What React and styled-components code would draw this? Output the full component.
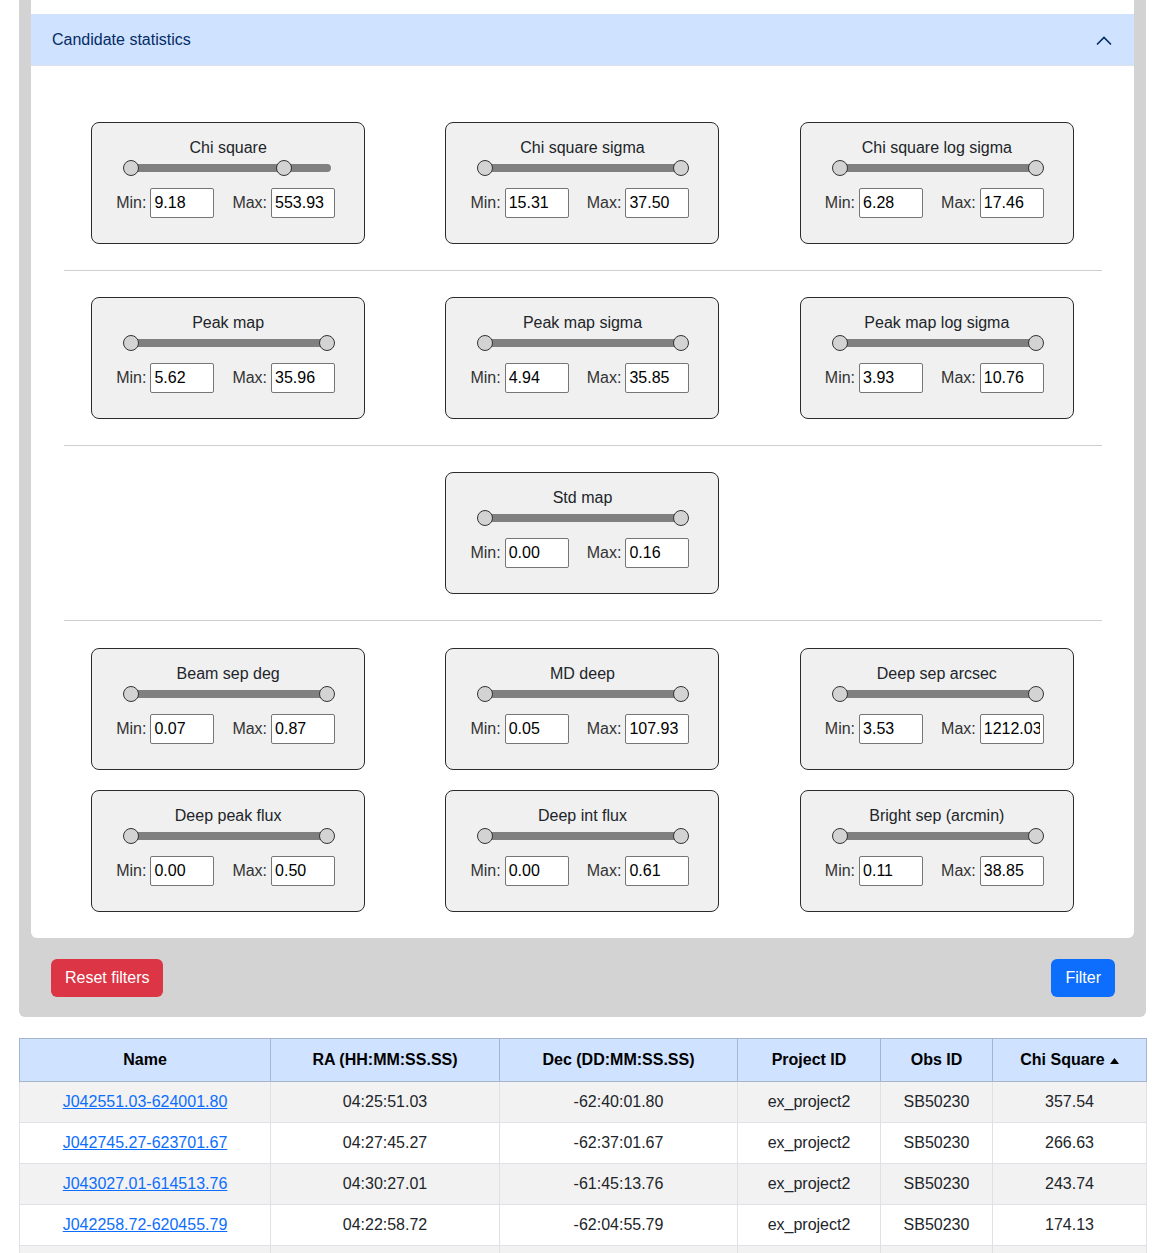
import React from 'react'
import styled, { createGlobalStyle } from 'styled-components'

const filterRows = [
  [
    { title: 'Chi square', min: '9.18', max: '553.93', lo: 0, hi: 0.78 },
    { title: 'Chi square sigma', min: '15.31', max: '37.50', lo: 0, hi: 1 },
    { title: 'Chi square log sigma', min: '6.28', max: '17.46', lo: 0, hi: 1 },
  ],
  [
    { title: 'Peak map', min: '5.62', max: '35.96', lo: 0, hi: 1 },
    { title: 'Peak map sigma', min: '4.94', max: '35.85', lo: 0, hi: 1 },
    { title: 'Peak map log sigma', min: '3.93', max: '10.76', lo: 0, hi: 1 },
  ],
  [null, { title: 'Std map', min: '0.00', max: '0.16', lo: 0, hi: 1 }, null],
]

const lastGroup = [
  { title: 'Beam sep deg', min: '0.07', max: '0.87', lo: 0, hi: 1 },
  { title: 'MD deep', min: '0.05', max: '107.93', lo: 0, hi: 1 },
  { title: 'Deep sep arcsec', min: '3.53', max: '1212.03', lo: 0, hi: 1 },
  { title: 'Deep peak flux', min: '0.00', max: '0.50', lo: 0, hi: 1 },
  { title: 'Deep int flux', min: '0.00', max: '0.61', lo: 0, hi: 1 },
  { title: 'Bright sep (arcmin)', min: '0.11', max: '38.85', lo: 0, hi: 1 },
]

const candidates = [
  ['J042551.03-624001.80', '04:25:51.03', '-62:40:01.80', 'ex_project2', 'SB50230', '357.54'],
  ['J042745.27-623701.67', '04:27:45.27', '-62:37:01.67', 'ex_project2', 'SB50230', '266.63'],
  ['J043027.01-614513.76', '04:30:27.01', '-61:45:13.76', 'ex_project2', 'SB50230', '243.74'],
  ['J042258.72-620455.79', '04:22:58.72', '-62:04:55.79', 'ex_project2', 'SB50230', '174.13'],
  ['J042611.48-621933.05', '04:26:11.48', '-62:19:33.05', 'ex_project2', 'SB50230', '151.20'],
]

const columns = [
  { label: 'Name', width: 251 },
  { label: 'RA (HH:MM:SS.SS)', width: 229 },
  { label: 'Dec (DD:MM:SS.SS)', width: 238 },
  { label: 'Project ID', width: 143 },
  { label: 'Obs ID', width: 112 },
  { label: 'Chi Square', width: 154, sorted: true },
]

// thumbs travel 196px, track is 200px long
const TRAVEL = 196

function RangeFilter({ f }) {
  return (
    <FilterCard>
      <FilterTitle>{f.title}</FilterTitle>
      <Slider>
        <Track />
        <Thumb style={{ left: f.lo * TRAVEL }} />
        <Thumb style={{ left: f.hi * TRAVEL }} />
      </Slider>
      <Inputs>
        <Label>Min:</Label>
        <NumBox defaultValue={f.min} />
        <Label $gap>Max:</Label>
        <NumBox defaultValue={f.max} />
      </Inputs>
    </FilterCard>
  )
}

function App() {
  return (
    <>
      <GlobalStyle />
      <Page>
        <Panel>
          <Card>
            <AccHeader>
              <span>Candidate statistics</span>
              <svg width="16" height="12" viewBox="0 0 16 12">
                <polyline points="1,10.5 8,3.5 15,10.5" fill="none" stroke="#052c65" strokeWidth="1.6" />
              </svg>
            </AccHeader>
            <AccBody>
              {filterRows.map((row, i) => (
                <React.Fragment key={i}>
                  <FilterGrid>
                    {row.map((f, j) => (f ? <RangeFilter key={j} f={f} /> : <div key={j} />))}
                  </FilterGrid>
                  <Divider />
                </React.Fragment>
              ))}
              <FilterGrid $rowGap={20} $offset={1}>
                {lastGroup.map((f, j) => <RangeFilter key={j} f={f} />)}
              </FilterGrid>
            </AccBody>
          </Card>
          <ButtonRow>
            <Btn $variant="danger">Reset filters</Btn>
            <Btn>Filter</Btn>
          </ButtonRow>
        </Panel>

        <Table>
          <colgroup>
            {columns.map(c => <col key={c.label} style={{ width: c.width }} />)}
          </colgroup>
          <thead>
            <tr>
              {columns.map(c => (
                <Th key={c.label}>
                  {c.label}
                  {c.sorted && (
                    <SortIcon width="9" height="6" viewBox="0 0 9 6">
                      <polygon points="0,6 4.5,0 9,6" fill="#000" />
                    </SortIcon>
                  )}
                </Th>
              ))}
            </tr>
          </thead>
          <tbody>
            {candidates.map((r, i) => (
              <Tr key={r[0]} $striped={i % 2 === 0}>
                <Td><NameLink href="#">{r[0]}</NameLink></Td>
                {r.slice(1).map((v, k) => <Td key={k}>{v}</Td>)}
              </Tr>
            ))}
          </tbody>
        </Table>
      </Page>
    </>
  )
}

export default App

const GlobalStyle = createGlobalStyle`
  body{
    margin:0;
    background:#fff;
    font-family:"Liberation Sans", Arial, sans-serif;
    color:#212529;
  }
`
const Page = styled.div`
  padding:0 14px 40px 19px;
`
const Panel = styled.div`
  background:#d3d3d3;
  padding:0 12px 20px 12px;
  border-radius:0 0 6px 6px;
`
const Card = styled.div`
  background:#fff;
  padding-top:14px;
  border-radius:0 0 6px 6px;
  overflow:hidden;
`
const AccHeader = styled.div`
  height:52px;
  box-sizing:border-box;
  background:#cfe2ff;
  color:#052c65;
  font-size:16px;
  display:flex;
  align-items:center;
  justify-content:space-between;
  padding:0 22px 0 21px;
  border-bottom:1px solid #dee2e6;
`
const AccBody = styled.div`
  padding:56px 20px 26px;
`
const FilterGrid = styled.div`
  display:grid;
  grid-template-columns:repeat(3, 1fr);
  justify-items:center;
  row-gap:${p => p.$rowGap || 0}px;
  padding-top:${p => p.$offset || 0}px;
`
const Divider = styled.hr`
  margin:26px 12px 26px 13px;
  border:0;
  border-top:1px solid #cfcfcf;
`
const FilterCard = styled.div`
  width:274px;
  height:122px;
  box-sizing:border-box;
  background:#f0f0f0;
  border:1px solid #2b2b2b;
  border-radius:8px;
  padding:15px 0 0;
`
const FilterTitle = styled.div`
  text-align:center;
  font-size:16px;
  line-height:20px;
  color:#212529;
`
const Slider = styled.div`
  position:relative;
  width:200px;
  height:16px;
  margin:2px 0 0 39px;
`
const Track = styled.div`
  position:absolute;
  left:0;
  right:0;
  top:4px;
  height:8px;
  border-radius:4px;
  background:#808080;
`
const Thumb = styled.div`
  position:absolute;
  top:0;
  width:16px;
  height:16px;
  margin-left:-8px;
  box-sizing:border-box;
  border-radius:50%;
  background:#d3d3d3;
  border:1.5px solid #333;
`
const Inputs = styled.div`
  display:flex;
  align-items:center;
  margin:12px 0 0 24px;
`
const Label = styled.span`
  font-size:16px;
  color:#333;
  margin:0 4px 0 ${p => (p.$gap ? '18px' : '0')};
`
const NumBox = styled.input`
  width:64px;
  height:30px;
  box-sizing:border-box;
  border:1px solid #767676;
  border-radius:2px;
  padding:0 3px;
  font:16px "Liberation Sans", Arial, sans-serif;
  color:#000;
  background:#fff;
`
const ButtonRow = styled.div`
  display:flex;
  justify-content:space-between;
  padding:21px 19px 0 20px;
`
const Btn = styled.button`
  height:38px;
  padding:0 14px;
  border:0;
  border-radius:6px;
  font:16px "Liberation Sans", Arial, sans-serif;
  color:#fff;
  background:${p => (p.$variant === 'danger' ? '#dc3545' : '#0d6efd')};
`
const Table = styled.table`
  width:100%;
  margin-top:21px;
  border-collapse:collapse;
  table-layout:fixed;
  font-size:16px;
`
const Th = styled.th`
  background:#cfe2ff;
  border:1px solid #a6b5cc;
  padding:9px 8px;
  line-height:24px;
  font-weight:700;
  color:#000;
  text-align:center;
`
const SortIcon = styled.svg`
  margin-left:5px;
  vertical-align:middle;
`
const Tr = styled.tr`
  background:${p => (p.$striped ? '#f2f2f2' : '#fff')};
`
const Td = styled.td`
  border:1px solid #dee2e6;
  padding:8px;
  line-height:24px;
  text-align:center;
  color:#212529;
`
const NameLink = styled.a`
  color:#0d6efd;
  text-decoration:underline;
`
